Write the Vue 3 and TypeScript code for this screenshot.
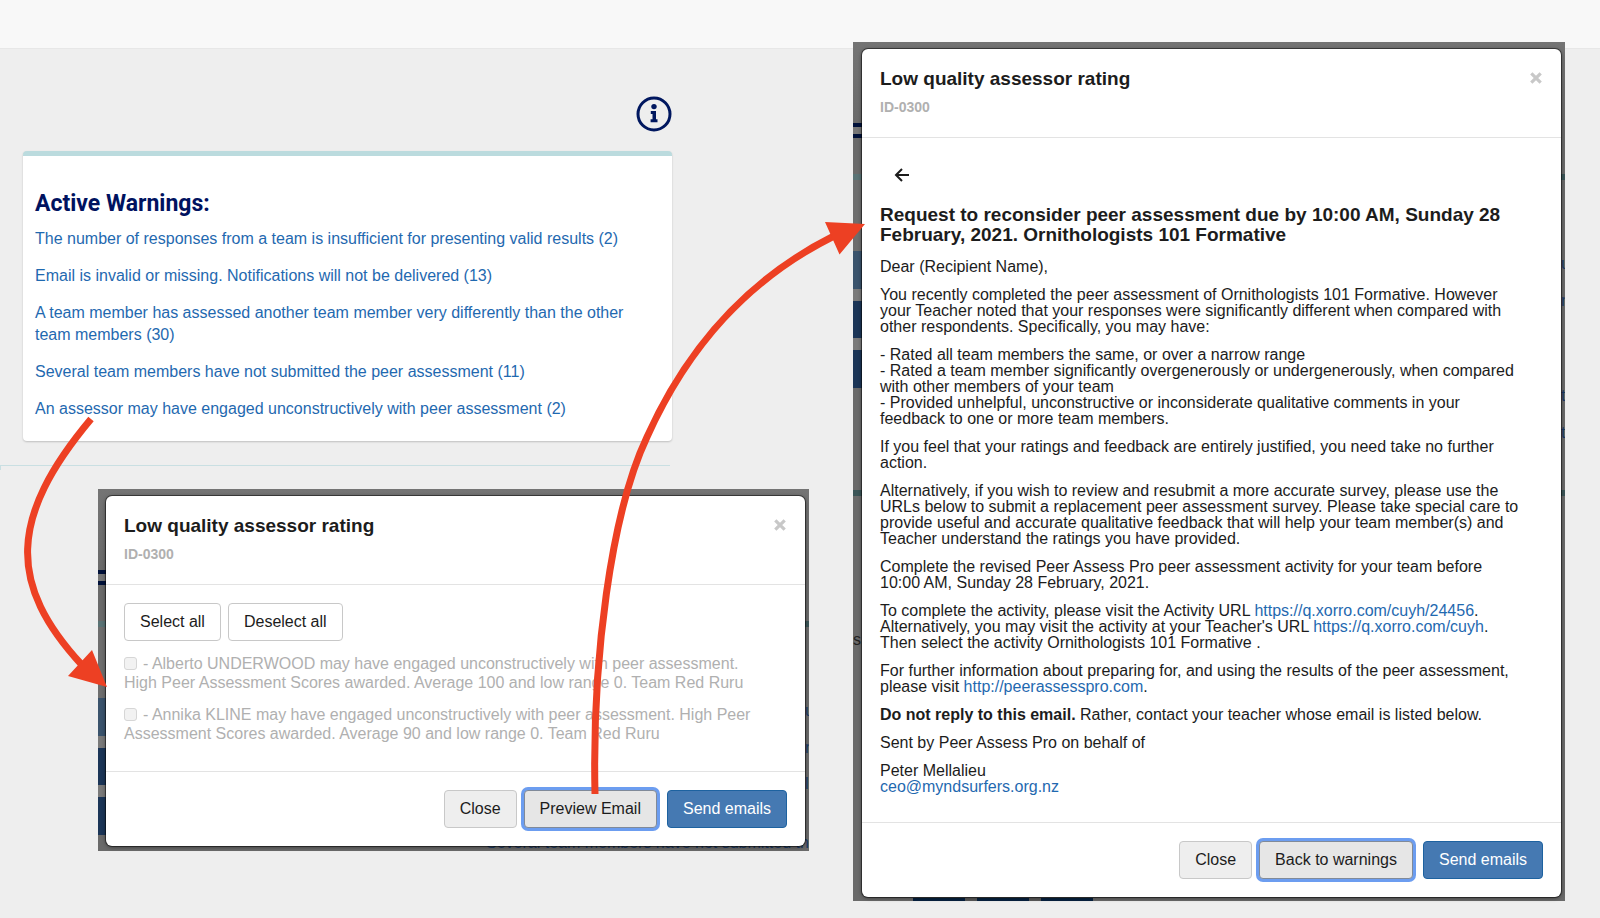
<script setup lang="ts">
import { ref } from 'vue'

interface Warning {
  text: string
  count: number
}

interface Assessor {
  id: string
  text: string
  checked: boolean
}

const warnings: Warning[] = [
  { text: 'The number of responses from a team is insufficient for presenting valid results', count: 2 },
  { text: 'Email is invalid or missing. Notifications will not be delivered', count: 13 },
  { text: 'A team member has assessed another team member very differently than the other team members', count: 30 },
  { text: 'Several team members have not submitted the peer assessment', count: 11 },
  { text: 'An assessor may have engaged unconstructively with peer assessment', count: 2 },
]

const assessors = ref<Assessor[]>([
  {
    id: 'assessor-1',
    text: '- Alberto UNDERWOOD may have engaged unconstructively with peer assessment. High Peer Assessment Scores awarded. Average 100 and low range 0. Team Red Ruru',
    checked: false,
  },
  {
    id: 'assessor-2',
    text: '- Annika KLINE may have engaged unconstructively with peer assessment. High Peer Assessment Scores awarded. Average 90 and low range 0. Team Red Ruru',
    checked: false,
  },
])

function setAll(value: boolean): void {
  assessors.value.forEach((a) => (a.checked = value))
}
</script>

<template>
  <div class="page">
    <header class="topbar"></header>
    <main class="stage">
      <div class="left">
        <div class="panel-area">
          <button class="info" type="button" aria-label="Information">
            <svg viewBox="0 0 36 36" width="36" height="36">
              <circle cx="18" cy="18" r="16" fill="none" stroke="#00175f" stroke-width="3" />
              <circle cx="18" cy="10.6" r="2.7" fill="#00175f" />
              <path d="M14.8 15h5.2v8.300h1.500v3h-6.900v-3h1.900v-5.300h-1.700z" fill="#00175f" />
            </svg>
          </button>
          <section class="card">
            <h2>Active Warnings:</h2>
            <ul>
              <li v-for="w in warnings" :key="w.text">
                <a href="#">{{ w.text }} ({{ w.count }})</a>
              </li>
            </ul>
          </section>
        </div>
        <div class="rule"></div>

        <div class="backdrop backdrop-list">
          <div class="ghosts" aria-hidden="true">
            <i class="band"></i>
            <span class="g g-u">u</span>
            <span class="g g-r">r</span>
            <span class="g g-l">l</span>
            <span class="g g-foot">Several team members have not submitted the</span>
          </div>
          <section class="modal" role="dialog" aria-labelledby="list-title">
            <header class="modal-head">
              <div>
                <h3 id="list-title">Low quality assessor rating</h3>
                <small>ID-0300</small>
              </div>
              <button class="close" type="button" aria-label="Dismiss">
                <svg viewBox="0 0 12 12" width="12" height="12"><path d="M1.300 1.300l9.400 9.400M10.700 1.300l-9.400 9.400" stroke="#c8c8c8" stroke-width="3.200" /></svg>
              </button>
            </header>
            <div class="modal-body list-body">
              <div class="tools">
                <button class="btn plain" type="button" @click="setAll(true)">Select all</button>
                <button class="btn plain" type="button" @click="setAll(false)">Deselect all</button>
              </div>
              <p v-for="a in assessors" :key="a.id" class="assessor">
                <input :id="a.id" v-model="a.checked" type="checkbox" />
                <label :for="a.id">{{ a.text }}</label>
              </p>
            </div>
            <footer class="modal-foot">
              <button class="btn" type="button">Close</button>
              <button class="btn focused" type="button">Preview Email</button>
              <button class="btn primary" type="button">Send emails</button>
            </footer>
          </section>
        </div>
      </div>

      <div class="backdrop backdrop-mail">
        <div class="ghosts" aria-hidden="true">
          <i class="band"></i>
          <i class="band band-low"></i>
          <span class="g g-u">u</span>
          <span class="g g-r">r</span>
          <span class="g g-t1">t</span>
          <span class="g g-t2">t</span>
          <span class="g g-s">s</span>
          <i class="tabs"></i>
        </div>
        <section class="modal" role="dialog" aria-labelledby="mail-title">
          <header class="modal-head">
            <div>
              <h3 id="mail-title">Low quality assessor rating</h3>
              <small>ID-0300</small>
            </div>
            <button class="close" type="button" aria-label="Dismiss">
              <svg viewBox="0 0 12 12" width="12" height="12"><path d="M1.300 1.300l9.400 9.400M10.700 1.300l-9.400 9.400" stroke="#c8c8c8" stroke-width="3.200" /></svg>
            </button>
          </header>
          <div class="modal-body mail-body">
            <button class="back" type="button" aria-label="Back">
              <svg viewBox="0 0 16 14" width="16" height="14"><path d="M15 7H2M8 1L2 7l6 6" fill="none" stroke="#1c1c1c" stroke-width="2" /></svg>
            </button>
            <h4>Request to reconsider peer assessment due by 10:00 AM, Sunday 28 February, 2021. Ornithologists 101 Formative</h4>
            <p>Dear (Recipient Name),</p>
            <p>You recently completed the peer assessment of Ornithologists 101 Formative. However your Teacher noted that your responses were significantly different when compared with other respondents. Specifically, you may have:</p>
            <p>
              - Rated all team members the same, or over a narrow range<br />
              - Rated a team member significantly overgenerously or undergenerously, when compared with other members of your team<br />
              - Provided unhelpful, unconstructive or inconsiderate qualitative comments in your feedback to one or more team members.
            </p>
            <p>If you feel that your ratings and feedback are entirely justified, you need take no further action.</p>
            <p>Alternatively, if you wish to review and resubmit a more accurate survey, please use the URLs below to submit a replacement peer assessment survey. Please take special care to provide useful and accurate qualitative feedback that will help your team member(s) and Teacher understand the ratings you have provided.</p>
            <p>Complete the revised Peer Assess Pro peer assessment activity for your team before 10:00 AM, Sunday 28 February, 2021.</p>
            <p>
              To complete the activity, please visit the Activity URL <a href="#">https://q.xorro.com/cuyh/24456</a>.
              Alternatively, you may visit the activity at your Teacher's URL <a href="#">https://q.xorro.com/cuyh</a>.
              Then select the activity Ornithologists 101 Formative .
            </p>
            <p>For further information about preparing for, and using the results of the peer assessment, please visit <a href="#">http://peerassesspro.com</a>.</p>
            <p><strong>Do not reply to this email.</strong> Rather, contact your teacher whose email is listed below.</p>
            <p>Sent by Peer Assess Pro on behalf of</p>
            <p>Peter Mellalieu<br /><a href="#">ceo@myndsurfers.org.nz</a></p>
          </div>
          <footer class="modal-foot">
            <button class="btn" type="button">Close</button>
            <button class="btn focused" type="button">Back to warnings</button>
            <button class="btn primary" type="button">Send emails</button>
          </footer>
        </section>
      </div>
    </main>

    <svg class="arrows" viewBox="0 0 1600 918" preserveAspectRatio="none" aria-hidden="true">
      <g fill="none" stroke="#ed4023" stroke-width="7">
        <path d="M91 419C8 518 8 585 82 665" />
        <path d="M595 794C592 660 611 513 647 437C688 346 748 279 834 236" />
      </g>
      <path d="M107 687L92 650L68 676ZM865 224L825 222L839.500 254.500Z" fill="#ed4023" />
    </svg>
  </div>
</template>

<style>
body {
  margin: 0;
  background: #eeeeee;
}
</style>

<style scoped>
* {
  box-sizing: border-box;
}
.page {
  position: relative;
  min-height: 100vh;
  font: 16px/16px "Liberation Sans", Arial, sans-serif;
  color: #1c1c1c;
  overflow: hidden;
}
.topbar {
  height: 49px;
  background: #f8f8f8;
  border-bottom: 1px solid #e7e7e7;
}
.stage {
  display: grid;
  grid-template-columns: 853fr 712fr 35fr;
  align-items: start;
}
h2, h3, h4, p, ul {
  margin: 0;
  padding: 0;
}
a {
  color: #1f69b0;
  text-decoration: none;
}
button {
  font: inherit;
  color: inherit;
  cursor: pointer;
}

/* Warnings panel */
.panel-area {
  display: flex;
  flex-direction: column;
  align-items: flex-end;
  margin: 47px 181px 0 23px;
}
.info {
  display: block;
  padding: 0;
  border: 0;
  background: none;
}
.info svg {
  display: block;
}
.card {
  width: 100%;
  margin-top: 19px;
  padding: 34px 20px 21px 12px;
  background: #fff;
  border-top: 5px solid #bbdbde;
  border-radius: 4px;
  box-shadow: 0 1px 2px rgba(0, 0, 0, 0.2);
}
.card h2 {
  font: bold 23px/28px Roboto, sans-serif;
  color: #00125f;
}
.card ul {
  display: flex;
  flex-direction: column;
  gap: 15px;
  padding-top: 10px;
  list-style: none;
  line-height: 22px;
}
.rule {
  height: 5px;
  margin: 24px 183px 0 0;
  border-top: 1px solid #c9dfe2;
  border-left: 1px solid #c9dfe2;
}

/* Dimmed page behind each dialog */
.backdrop {
  position: relative;
  padding: 7px 4px 5px 8px;
  background: linear-gradient(#747474, #6a6a6a 80px);
}
.backdrop-list {
  margin: 19px 44px 0 98px;
}
.backdrop-mail {
  margin-top: -7px;
  padding: 7px 4px 4px 9px;
}
.ghosts {
  position: absolute;
  inset: 0;
  overflow: hidden;
  color: #1b3a66;
  background: linear-gradient(
    transparent 81px, #00113a 81px 85px, #777 85px 92px, #00113a 92px 96px,
    transparent 96px 132px, #5a7375 132px 138px, #6e6e6e 138px 209px,
    #3a536c 209px 247px, #7a7a7a 247px 259px, #1b3557 259px 296px,
    #7a7a7a 296px 308px, #1b3557 308px 346px, transparent 346px
  ) 0 0 / 12px 100% no-repeat;
}
.band {
  position: absolute;
  top: 132px;
  right: 0;
  width: 4px;
  height: 6px;
  background: #3b5557;
}
.band-low {
  top: 448px;
  width: 100%;
}
.g {
  position: absolute;
  left: calc(100% - 4px);
  white-space: nowrap;
}
.g-u { top: 214px; }
.g-r { top: 251px; }
.g-l { top: 287px; }
.g-t1 { top: 346px; }
.g-t2 { top: 383px; }
.g-s { top: 590px; left: 0; color: #222; }
.g-foot {
  top: 346px;
  left: 388px;
}
.tabs {
  position: absolute;
  left: 60px;
  bottom: 0;
  width: 180px;
  height: 3px;
  background: repeating-linear-gradient(90deg, #06213f 0 52px, #5a5a5a 52px 64px);
}

/* Dialogs */
.modal {
  position: relative;
  background: #fff;
  border-radius: 6px;
  box-shadow: 0 0 0 1px rgba(0, 0, 0, 0.45), 0 1px 4px rgba(0, 0, 0, 0.5);
}
.modal-head {
  display: flex;
  justify-content: space-between;
  align-items: flex-start;
  padding: 19px 18px 22px;
  border-bottom: 1px solid #e3e3e3;
}
.modal-head h3 {
  font-size: 19px;
  line-height: 22px;
}
.modal-head small {
  display: block;
  margin-top: 9px;
  font-size: 14px;
  font-weight: bold;
  color: #b0b0b0;
}
.close {
  padding: 4px 1px;
  border: 0;
  background: none;
}
.close svg {
  display: block;
}
.modal-body {
  padding: 0 18px;
}
.modal-foot {
  display: flex;
  justify-content: flex-end;
  gap: 7px;
  padding: 18px;
  border-top: 1px solid #e3e3e3;
}
.btn {
  height: 38px;
  padding: 0 15px;
  border: 1px solid #c8c8c8;
  border-radius: 4px;
  background: #eeeeee;
}
.btn.plain {
  background: #fff;
}
.btn.focused {
  background: #e6e6e6;
  border-color: #808a99;
  box-shadow: 0 0 0 3px #6c9df0;
}
.btn.primary {
  margin-left: 3px;
  color: #fff;
  background: #4579b2;
  border-color: #1d62a0;
}
.list-body {
  padding-top: 18px;
  padding-bottom: 28px;
}
.tools {
  display: flex;
  gap: 7px;
  margin-bottom: 13px;
}
.assessor {
  padding-right: 20px;
  line-height: 19px;
  color: #b0b0b0;
}
.assessor + .assessor {
  margin-top: 13px;
}
.assessor input {
  appearance: none;
  width: 13px;
  height: 13px;
  margin: 0 6px 0 0;
  border: 1px solid #d6d6d6;
  border-radius: 3px;
  background: #f2f2f2;
  vertical-align: -1px;
}
.assessor input:checked {
  background: #6c9df0;
}
.back {
  display: block;
  margin: 0 0 23px;
  padding: 30px 14px 0;
  border: 0;
  background: none;
}
.back svg {
  display: block;
}
.mail-body {
  padding-right: 38px;
  padding-bottom: 27px;
}
.mail-body h4 {
  margin-bottom: 14px;
  font-size: 19px;
  line-height: 20px;
}
.mail-body p + p {
  margin-top: 12px;
}
.arrows {
  position: absolute;
  top: 0;
  left: 0;
  width: 100%;
  height: 918px;
  pointer-events: none;
}
</style>
